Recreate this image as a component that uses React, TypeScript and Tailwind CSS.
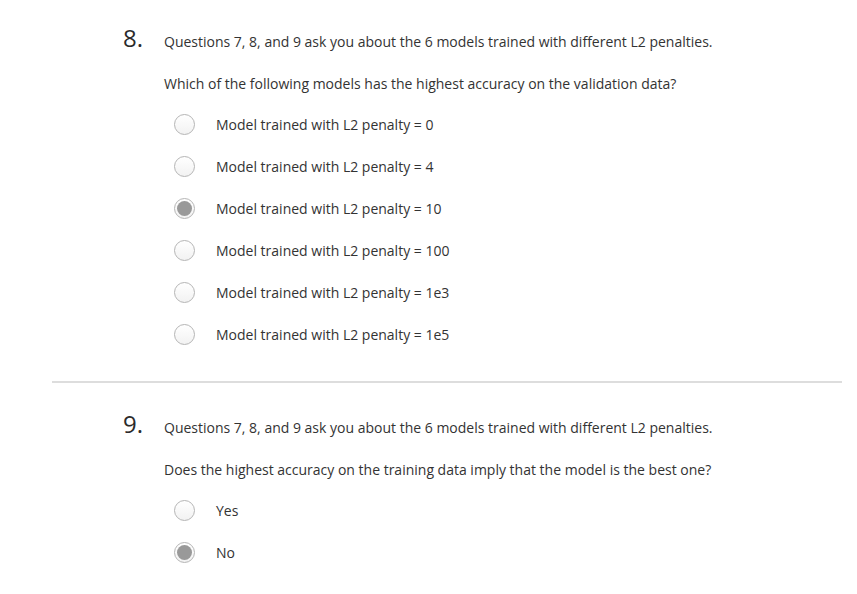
import React from "react";

function Radio({ checked }: { checked?: boolean }) {
  return (
    <span className="flex h-[21px] w-[21px] shrink-0 items-center justify-center rounded-full border border-[#b5b5b5] bg-gradient-to-b from-white to-[#f2f2f2]">
      {checked && <span className="block h-[15px] w-[15px] rounded-full bg-[#999999]" />}
    </span>
  );
}

function Question({
  num,
  prompt,
  options,
  selected,
}: {
  num: string;
  prompt: string;
  options: string[];
  selected: number;
}) {
  return (
    <div className="flex items-baseline pl-[123px]">
      <div className="w-[41px] shrink-0 text-[24px] leading-none text-[#2b2b2b]">{num}</div>
      <div className="flex flex-col text-[14px] leading-[20px] text-[#333]">
        <div>Questions 7, 8, and 9 ask you about the 6 models trained with different L2 penalties.</div>
        <div className="mt-[22px]">{prompt}</div>
        <div className="mt-[20px] flex flex-col gap-[21px]">
          {options.map((o, i) => (
            <div key={o} className="flex h-[21px] items-center pl-[10px]">
              <Radio checked={i === selected} />
              <span className="ml-[21px]">{o}</span>
            </div>
          ))}
        </div>
      </div>
    </div>
  );
}

export default function App() {
  return (
    <div
      className="min-h-[594px] w-[857px] bg-white pt-[26px]"
      style={{ fontFamily: '"Open Sans", sans-serif' }}
    >
      <Question
        num="8."
        prompt="Which of the following models has the highest accuracy on the validation data?"
        options={[
          "Model trained with L2 penalty = 0",
          "Model trained with L2 penalty = 4",
          "Model trained with L2 penalty = 10",
          "Model trained with L2 penalty = 100",
          "Model trained with L2 penalty = 1e3",
          "Model trained with L2 penalty = 1e5",
        ]}
        selected={2}
      />
      <div className="ml-[52px] mr-[15px] mt-[36px] h-[2px] bg-[#dddddd]" />
      <div className="mt-[29px]">
        <Question
          num="9."
          prompt="Does the highest accuracy on the training data imply that the model is the best one?"
          options={["Yes", "No"]}
          selected={1}
        />
      </div>
    </div>
  );
}
